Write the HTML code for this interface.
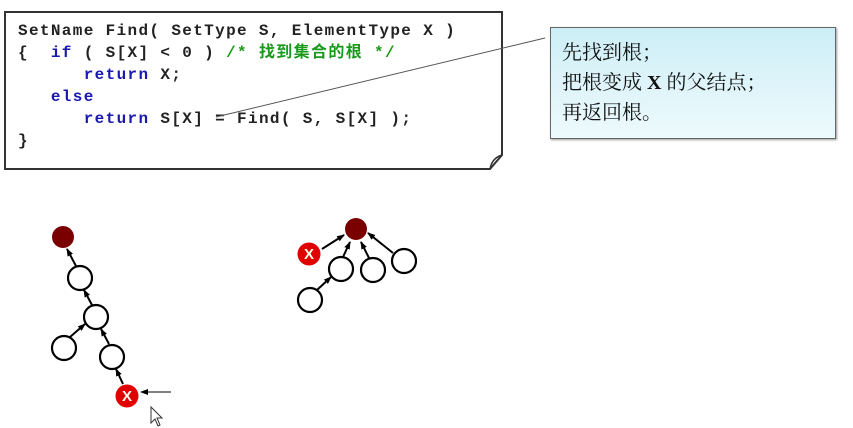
<!DOCTYPE html>
<html><head><meta charset="utf-8"><style>
body{margin:0;width:853px;height:428px;background:#fff;position:relative;overflow:hidden}
pre{position:absolute;left:18px;top:20px;margin:0;font:bold 16px/22px "Liberation Mono","Noto Sans CJK SC",monospace;letter-spacing:1.35px;color:#222}
.k{color:#1a1ab0}.c{color:#1a9a1a}
.call{position:absolute;left:550px;top:27px;width:286px;height:112px;box-sizing:border-box;border:1px solid #666;background:linear-gradient(#cdeef6,#eefafd);box-shadow:1px 1px 2px #999}
.call div{position:absolute;left:11px;top:10px;font:20px/30px "Liberation Serif","Noto Serif CJK SC",serif;color:#111}
</style></head><body>
<svg width="853" height="428" style="position:absolute;left:0;top:0">
<path d="M5,12 H502 V155 L490,169 H5 Z" fill="none" stroke="#333" stroke-width="2"/>
<path d="M490,169 Q492,158 502,155" fill="none" stroke="#333" stroke-width="1.5"/>
</svg>
<pre>SetName Find( SetType S, ElementType X )
{  <span class="k">if</span> ( S[X] &lt; 0 ) <span class="c">/* 找到集合的根 */</span>
      <span class="k">return</span> X;
   <span class="k">else</span>
      <span class="k">return</span> S[X] = Find( S, S[X] );
}</pre>
<div class="call"><div>先找到根；<br>把根变成 <b>X</b> 的父结点；<br>再返回根。</div></div>
<svg width="853" height="428" style="position:absolute;left:0;top:0">
<defs><marker id="a" markerUnits="userSpaceOnUse" markerWidth="8" markerHeight="8" refX="7" refY="4" orient="auto"><path d="M0,1L8,4L0,7z" fill="#000"/></marker></defs>
<line x1="216" y1="117" x2="545" y2="38" stroke="#555" stroke-width="1"/>
<g stroke="#000" stroke-width="2" fill="none" marker-end="url(#a)">
<line x1="76" y1="266" x2="67" y2="249"/>
<line x1="92" y1="305" x2="84" y2="290"/>
<line x1="70" y1="337" x2="85" y2="324"/>
<line x1="109" y1="344" x2="101" y2="329"/>
<line x1="123" y1="384" x2="116" y2="369"/>
<line x1="322" y1="249" x2="344" y2="235"/>
<line x1="343" y1="257" x2="350" y2="242"/>
<line x1="369" y1="258" x2="361" y2="242"/>
<line x1="393" y1="253" x2="368" y2="233"/>
<line x1="317" y1="290" x2="331" y2="277"/>
</g>
<line x1="171" y1="392" x2="141" y2="392" stroke="#000" stroke-width="1" marker-end="url(#a)"/>
<g fill="#7a0000"><circle cx="63" cy="237" r="11"/><circle cx="356" cy="229" r="11"/></g>
<g fill="#fff" stroke="#000" stroke-width="2.2">
<circle cx="80" cy="278" r="12"/><circle cx="96" cy="317" r="12"/><circle cx="64" cy="348" r="12"/><circle cx="112" cy="357" r="12"/>
<circle cx="341" cy="269" r="12"/><circle cx="373" cy="270" r="12"/><circle cx="404" cy="261" r="12"/><circle cx="310" cy="300" r="12"/>
</g>
<g fill="#e00000"><circle cx="127" cy="396" r="11.5"/><circle cx="309" cy="254" r="11.5"/></g>
<g fill="#ffe" font-family="Liberation Sans,sans-serif" font-weight="bold" font-size="15" text-anchor="middle">
<text x="127" y="401">X</text><text x="309" y="259">X</text></g>
<path d="M151,407 L151,423 L155,419 L158,426 L160,425 L157,418 L162,418 Z" fill="#fff" stroke="#333" stroke-width="1"/>
</svg>
</body></html>
